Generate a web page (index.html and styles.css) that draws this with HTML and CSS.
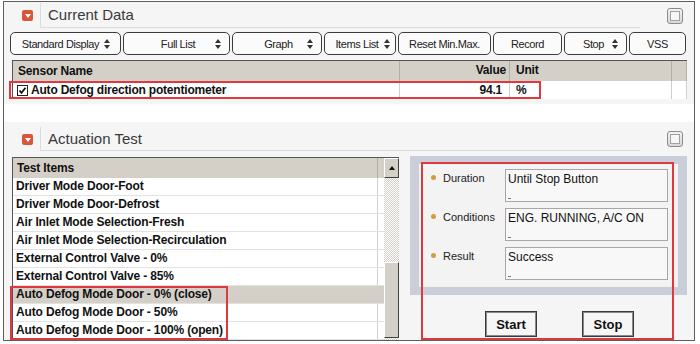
FILE: index.html
```html
<!DOCTYPE html>
<html lang="en">
<head>
    <meta charset="UTF-8">
    <meta name="viewport" content="width=device-width, initial-scale=1.0">
    <title>Current Data - Actuation Test</title>
    <link rel="stylesheet" href="styles.css">
</head>
<body>
    <div class="frame">
        <!-- Current Data -->
        <section class="panel panel-data">
            <div class="panel-head">
                <span class="fold-icon"></span>
                <h2 class="panel-title">Current Data</h2>
                <span class="max-btn"></span>
            </div>

            <div class="toolbar">
                <button class="tb-btn tb-tight w-std"><span class="tb-label">Standard Display</span><span class="spin"></span></button>
                <button class="tb-btn tb-spin w-full"><span class="tb-label">Full List</span><span class="spin"></span></button>
                <button class="tb-btn tb-spin w-graph"><span class="tb-label">Graph</span><span class="spin"></span></button>
                <button class="tb-btn tb-tight w-items"><span class="tb-label">Items List</span><span class="spin"></span></button>
                <button class="tb-btn w-reset"><span class="tb-label">Reset Min.Max.</span></button>
                <button class="tb-btn w-record"><span class="tb-label">Record</span></button>
                <button class="tb-btn tb-spin w-stop"><span class="tb-label">Stop</span><span class="spin"></span></button>
                <button class="tb-btn w-vss"><span class="tb-label">VSS</span></button>
            </div>

            <div class="sensor-table">
                <div class="st-row st-head">
                    <div class="st-name">Sensor Name</div>
                    <div class="st-value">Value</div>
                    <div class="st-unit">Unit</div>
                    <div class="st-pad"></div>
                </div>
                <div class="st-row">
                    <div class="st-name">
                        <span class="check">
                            <svg width="9" height="9" viewBox="0 0 9 9"><polyline points="1.5,4.5 3.5,6.8 7.5,1.8" fill="none" stroke="#111" stroke-width="1.8"/></svg>
                        </span>Auto Defog direction potentiometer
                    </div>
                    <div class="st-value">94.1</div>
                    <div class="st-unit">%</div>
                    <div class="st-pad"></div>
                </div>
            </div>
        </section>

        <!-- Actuation Test -->
        <section class="panel panel-act">
            <div class="panel-head">
                <span class="fold-icon"></span>
                <h2 class="panel-title">Actuation Test</h2>
                <span class="max-btn"></span>
            </div>

            <div class="act-body">
                <div class="test-list">
                    <div class="tl-items">
                        <div class="tl-row tl-head"><div class="tl-name">Test Items</div></div>
                        <div class="tl-row"><div class="tl-name">Driver Mode Door-Foot</div></div>
                        <div class="tl-row"><div class="tl-name">Driver Mode Door-Defrost</div></div>
                        <div class="tl-row"><div class="tl-name">Air Inlet Mode Selection-Fresh</div></div>
                        <div class="tl-row"><div class="tl-name">Air Inlet Mode Selection-Recirculation</div></div>
                        <div class="tl-row"><div class="tl-name">External Control Valve - 0%</div></div>
                        <div class="tl-row"><div class="tl-name">External Control Valve - 85%</div></div>
                        <div class="tl-row selected"><div class="tl-name">Auto Defog Mode Door - 0% (close)</div></div>
                        <div class="tl-row"><div class="tl-name">Auto Defog Mode Door - 50%</div></div>
                        <div class="tl-row"><div class="tl-name">Auto Defog Mode Door - 100% (open)</div></div>
                    </div>
                    <div class="tl-scroll">
                        <span class="sb-up"></span>
                        <span class="sb-thumb"></span>
                    </div>
                </div>

                <div class="act-side">
                    <div class="info-box">
                        <div class="info-row">
                            <span class="bullet"></span>
                            <span class="info-label">Duration</span>
                            <div class="info-value">Until Stop Button</div>
                        </div>
                        <div class="info-row">
                            <span class="bullet"></span>
                            <span class="info-label">Conditions</span>
                            <div class="info-value">ENG. RUNNING, A/C ON</div>
                        </div>
                        <div class="info-row">
                            <span class="bullet"></span>
                            <span class="info-label">Result</span>
                            <div class="info-value">Success</div>
                        </div>
                    </div>
                    <div class="act-buttons">
                        <button class="act-btn">Start</button>
                        <button class="act-btn">Stop</button>
                    </div>
                </div>
            </div>
        </section>

        <!-- red annotation boxes -->
        <span class="mark mark-sensor"></span>
        <span class="mark mark-items"></span>
        <span class="mark mark-side"></span>
    </div>
</body>
</html>
```

FILE: styles.css
```css
body {
    margin: 0;
    background: #ffffff;
    font-family: "Liberation Sans", Arial, sans-serif;
    color: #111;
}

.frame {
    position: relative;
    width: 690px;
    height: 338px;
    margin: 1px 0 0 3px;
    border: 1px solid #5e5e5e;
}

.panel {
    background-color: #f5f5f5;
}

.panel-data {
    height: 102px;
}

.panel-act {
    height: 218px;
    margin-top: 18px;
}

/* Panel header */
.panel-head {
    display: flex;
    align-items: center;
    padding-top: 1px;
}

.panel-act .panel-head {
    padding-top: 5px;
}

.fold-icon {
    display: flex;
    align-items: center;
    justify-content: center;
    width: 11px;
    height: 11px;
    margin: 0 7px 0 18px;
    border-radius: 2px;
    background-color: #d9563a;
}

.fold-icon::after {
    content: "";
    margin-top: 1px;
    border-left: 3.5px solid transparent;
    border-right: 3.5px solid transparent;
    border-top: 4px solid #ffffff;
}

.panel-title {
    width: 592px;
    height: 24px;
    margin: 0;
    padding-left: 7px;
    border-left: 1px solid #dcdcdc;
    border-bottom: 1px solid #dcdcdc;
    font-size: 15px;
    font-weight: normal;
    line-height: 24px;
    color: #3a3a3a;
}

.panel-act .panel-title {
    height: 23px;
    line-height: 23px;
}

.max-btn {
    display: flex;
    align-items: center;
    justify-content: center;
    width: 16px;
    height: 16px;
    margin-left: 27px;
    box-sizing: border-box;
    border: 1px solid #8c8c8c;
    border-radius: 3px;
    background: linear-gradient(#f2f2f2, #d8d8d8);
}

.max-btn::after {
    content: "";
    width: 10px;
    height: 10px;
    box-sizing: border-box;
    border: 1px solid #a0a0a0;
    background-color: #f6f6f6;
}

/* Toolbar */
.toolbar {
    display: flex;
    gap: 2px;
    margin: 4px 0 0 6px;
}

.tb-btn {
    display: flex;
    align-items: center;
    height: 23px;
    padding: 0 8px;
    box-sizing: border-box;
    border: 1px solid #3c3c3c;
    border-radius: 5px;
    background-color: #fbfbfb;
    font-family: "Liberation Sans", Arial, sans-serif;
    font-size: 11px;
    letter-spacing: -0.4px;
    color: #222;
}

.tb-label {
    flex: 1;
    text-align: center;
    white-space: nowrap;
}

.tb-spin .tb-label {
    padding-left: 9px;
}

.w-std { width: 111px; padding: 0 10px 0 6px; }
.w-full { width: 107px; }
.w-graph { width: 90px; }
.w-items { width: 72px; padding: 0 5px; }
.w-reset { width: 93px; }
.w-record { width: 69px; }
.w-stop { width: 63px; }
.w-vss { width: 57px; }

.w-stop .tb-label {
    padding-left: 2px;
}

.spin {
    display: flex;
    flex-direction: column;
    gap: 2px;
}

.spin::before,
.spin::after {
    content: "";
    border-left: 3.5px solid transparent;
    border-right: 3.5px solid transparent;
}

.spin::before {
    border-bottom: 4px solid #333;
}

.spin::after {
    border-top: 4px solid #333;
}

/* Sensor table */
.sensor-table {
    width: 674px;
    margin: 5px 0 0 8px;
    border-left: 1px solid #555;
    font-size: 12px;
    font-weight: bold;
    letter-spacing: -0.2px;
}

.st-row {
    display: flex;
    height: 18px;
    line-height: 18px;
    background-color: #ffffff;
}

.st-row > div {
    box-sizing: border-box;
    border-right: 1px solid #cfcfcf;
}

.st-head {
    height: 20px;
    line-height: 19px;
    border-top: 1px solid #555;
    background-color: #d4d0c8;
}

.st-head > div {
    border-right-color: #b3afa7;
}

.st-name {
    display: flex;
    align-items: center;
    width: 387px;
    padding-left: 5px;
}

.st-value {
    width: 110px;
    padding-right: 7px;
    text-align: right;
}

.st-head .st-value {
    padding-right: 3px;
}

.st-unit {
    width: 162px;
    padding-left: 6px;
}

.st-pad {
    width: 15px;
}

.check {
    display: flex;
    align-items: center;
    justify-content: center;
    width: 11px;
    height: 11px;
    margin: 0 3px 0 -1px;
    box-sizing: border-box;
    border: 1px solid #222;
    background-color: #ffffff;
}

/* Actuation test body */
.act-body {
    display: flex;
    gap: 11px;
    margin: 6px 0 0 8px;
}

.test-list {
    display: flex;
    width: 387px;
    height: 183px;
    box-sizing: border-box;
    border-top: 1px solid #555;
    border-left: 1px solid #555;
    background-color: #ffffff;
}

.tl-items {
    flex: 1;
    font-size: 12px;
    font-weight: bold;
    letter-spacing: -0.15px;
}

.tl-row {
    height: 18px;
    box-sizing: border-box;
    border-bottom: 1px solid #e2e2e2;
}

.tl-name {
    width: 365px;
    height: 100%;
    box-sizing: border-box;
    padding-left: 3px;
    border-right: 1px solid #d0d0d0;
    line-height: 17px;
    white-space: nowrap;
}

.tl-head {
    height: 20px;
    border-bottom: none;
    background-color: #d4d0c8;
}

.tl-head .tl-name {
    padding-left: 4px;
    line-height: 20px;
    border-right-color: #b3afa7;
}

.tl-row.selected {
    background-color: #d4d0c8;
}

.tl-scroll {
    display: flex;
    flex-direction: column;
    width: 15px;
    background: repeating-conic-gradient(#d4d0c8 0 25%, #ffffff 0 50%) 0 0 / 2px 2px;
}

.sb-up,
.sb-thumb {
    box-sizing: border-box;
    border: 1px solid;
    border-color: #ffffff #404040 #404040 #ffffff;
    background-color: #d4d0c8;
}

.sb-up {
    display: flex;
    align-items: center;
    justify-content: center;
    height: 20px;
}

.sb-up::after {
    content: "";
    border-left: 3.5px solid transparent;
    border-right: 3.5px solid transparent;
    border-bottom: 4px solid #111;
}

.sb-thumb {
    height: 76px;
    margin: auto 0 2px;
}

/* Right side info */
.act-side {
    width: 277px;
    margin-top: -1px;
}

.info-box {
    display: flex;
    flex-direction: column;
    gap: 6px;
    padding: 5px 0 7px;
    border-style: solid;
    border-color: #c9ced9;
    border-width: 8px 9px;
    background-color: #f3f3f3;
}

.info-row {
    display: flex;
    align-items: flex-start;
}

.bullet {
    width: 5px;
    height: 5px;
    margin: 6px 7px 0 12px;
    border-radius: 50%;
    background-color: #d49a43;
}

.info-label {
    width: 62px;
    padding-top: 2px;
    font-size: 11px;
    line-height: 14px;
    color: #222;
}

.info-value {
    display: flex;
    flex-direction: column;
    width: 163px;
    height: 33px;
    box-sizing: border-box;
    padding: 1px 2px 0;
    border: 1px solid #a7a7a7;
    background-color: #f8f8f8;
    font-size: 12px;
    line-height: 16px;
    color: #111;
}

.info-value::after {
    content: "";
    width: 3px;
    height: 1px;
    margin-top: auto;
    margin-bottom: 2px;
    background-color: #777;
}

.act-buttons {
    display: flex;
    gap: 45px;
    margin: 16px 0 0 75px;
}

.act-btn {
    width: 52px;
    height: 26px;
    padding: 0;
    border: 1px solid #3a3a3a;
    box-shadow: inset 0 0 0 1px #8a8a8a;
    background-color: #f6f6f6;
    font-family: "Liberation Sans", Arial, sans-serif;
    font-size: 13px;
    font-weight: bold;
    color: #111;
}

/* Red annotation boxes */
.mark {
    position: absolute;
    box-sizing: border-box;
    border: 2px solid #e0383f;
}

.mark-sensor {
    left: 5px;
    top: 79px;
    width: 532px;
    height: 18px;
}

.mark-items {
    left: 6px;
    top: 284px;
    width: 218px;
    height: 54px;
}

.mark-side {
    left: 417px;
    top: 160px;
    width: 253px;
    height: 178px;
}
```
